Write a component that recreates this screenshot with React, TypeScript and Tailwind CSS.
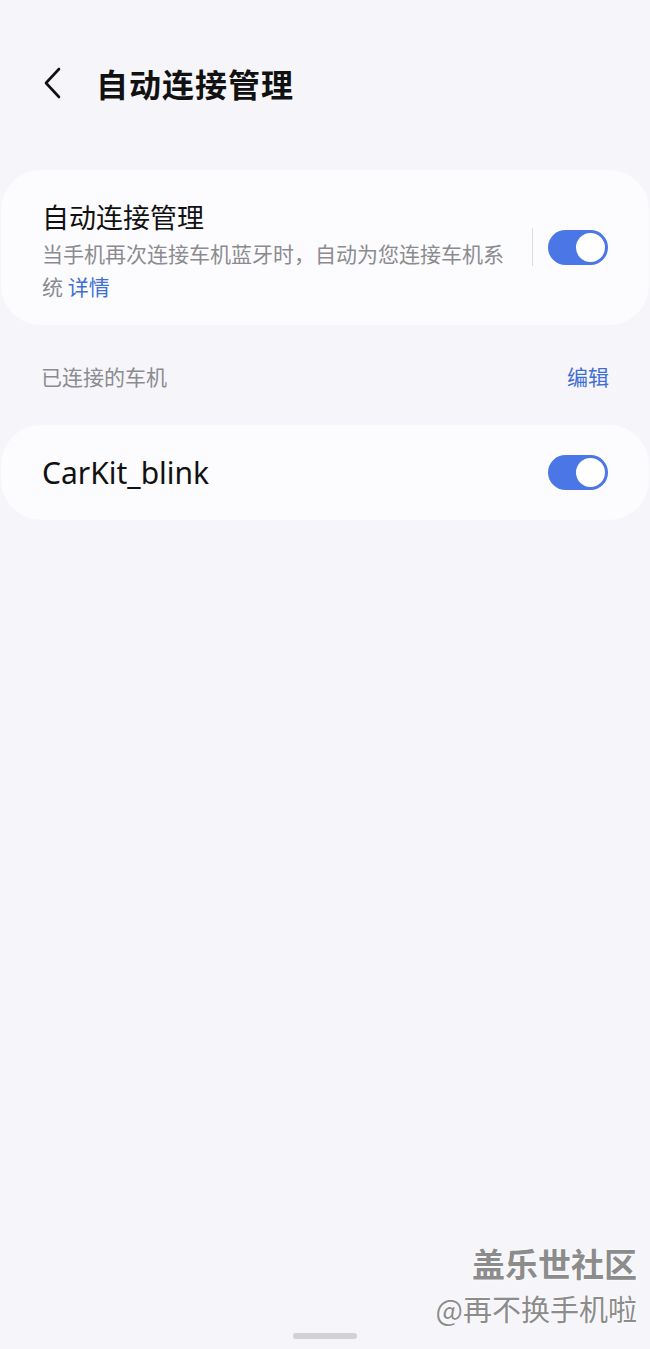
import React from "react";

const Toggle = () => (
    <div className="w-[60px] h-[35px] rounded-full bg-[#4a76e6] flex items-center justify-end pr-[3px] shrink-0">
        <div className="w-[29px] h-[29px] rounded-full bg-white" />
    </div>
);

const App = () => {
    const cjk = { fontFamily: '"Noto Sans CJK SC", "Noto Sans", sans-serif' };

    return (
        <div className="relative min-h-[1349px] w-full bg-[#f6f6fa] overflow-hidden" style={cjk}>
            {/* header */}
            <div className="flex items-center h-[46px] mt-[60px] mb-[64px] pl-[42px]">
                <svg width="22" height="34" viewBox="0 0 22 34" fill="none">
                    <path d="M17 3 L4 17 L17 31" stroke="#111" strokeWidth="2.6" strokeLinecap="round" strokeLinejoin="round" />
                </svg>
                <h1 className="ml-[32px] text-[32px] font-bold leading-none text-[#111] tracking-[1px]">
                    自动连接管理
                </h1>
            </div>

            {/* auto connect card */}
            <div className="mx-[1px] rounded-[40px] bg-[#fcfcfe] pt-[30px] pb-[22px] px-[41px] flex items-start">
                <div className="w-[470px]">
                    <div className="text-[27px] leading-[34px] text-[#111]">自动连接管理</div>
                    <p className="mt-[3px] text-[21px] leading-[33px] text-[#8b8b90]">
                        当手机再次连接车机蓝牙时，自动为您连接车机系统 <span className="text-[#3f6fd4]">详情</span>
                    </p>
                </div>
                <div className="ml-auto mt-[28px] flex items-center">
                    <div className="w-px h-[38px] bg-[#dcdce0] mr-[15px]" />
                    <Toggle />
                </div>
            </div>

            {/* section header */}
            <div className="flex items-center justify-between px-[41px] mt-[37px] mb-[35px] text-[21px] leading-[28px]">
                <span className="text-[#8b8b90]">已连接的车机</span>
                <span className="text-[#3f6fd4]">编辑</span>
            </div>

            {/* connected car */}
            <div className="mx-[1px] rounded-[40px] bg-[#fcfcfe] h-[95px] px-[41px] flex items-center justify-between">
                <span className="text-[30px] text-[#111]" style={{ fontFamily: '"Noto Sans", sans-serif' }}>
                    CarKit_blink
                </span>
                <Toggle />
            </div>

            {/* watermark */}
            <div className="absolute right-[13px] bottom-[22px] flex flex-col items-end text-[#8c8c8c] [text-shadow:0_0_2px_#fff,0_0_2px_#fff]">
                <span className="text-[33px] font-bold leading-[40px]">盖乐世社区</span>
                <span className="text-[29px] leading-[38px] mt-[6px]">@再不换手机啦</span>
            </div>

            {/* home indicator */}
            <div className="absolute left-[293px] bottom-[10px] w-[64px] h-[6px] rounded-full bg-[#d2d2d6]" />
        </div>
    );
};

export default App;
